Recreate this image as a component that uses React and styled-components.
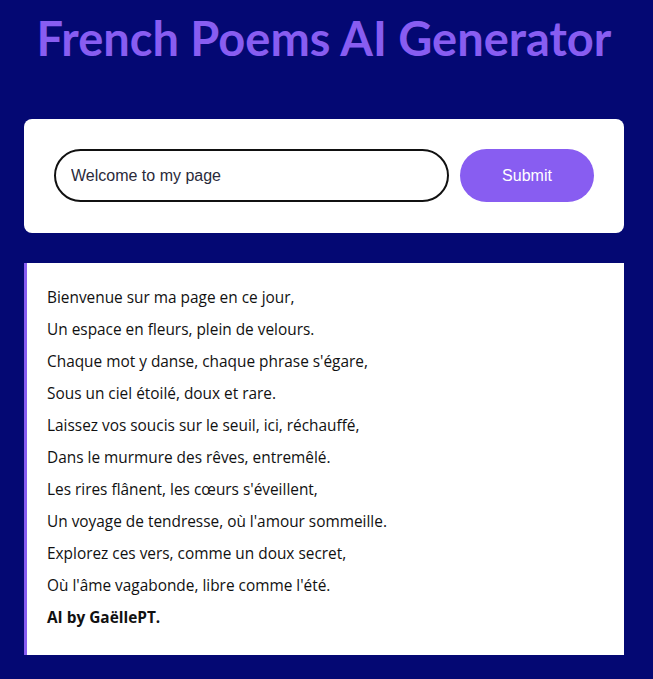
import React, { useState } from 'react'
import styled, { createGlobalStyle } from 'styled-components'

const poem = [
  'Bienvenue sur ma page en ce jour,',
  'Un espace en fleurs, plein de velours.',
  "Chaque mot y danse, chaque phrase s'égare,",
  'Sous un ciel étoilé, doux et rare.',
  'Laissez vos soucis sur le seuil, ici, réchauffé,',
  'Dans le murmure des rêves, entremêlé.',
  "Les rires flânent, les cœurs s'éveillent,",
  "Un voyage de tendresse, où l'amour sommeille.",
  'Explorez ces vers, comme un doux secret,',
  "Où l'âme vagabonde, libre comme l'été."
]

export default function App () {
  const [text, setText] = useState('Welcome to my page')

  return (
    <>
      <GlobalStyle />
      <StyledContainer>
        <StyledTitle>French Poems AI Generator</StyledTitle>
        <StyledFormCard onSubmit={event => { event.preventDefault() }}>
          <StyledInput
            value={text}
            onChange={event => { setText(event.target.value) }}
          />
          <StyledButton type='submit'>Submit</StyledButton>
        </StyledFormCard>
        <StyledPoem>
          {poem.map(line => <StyledLine key={line}>{line}</StyledLine>)}
          <StyledSignature>AI by GaëllePT.</StyledSignature>
        </StyledPoem>
      </StyledContainer>
    </>
  )
}

const GlobalStyle = createGlobalStyle`
  body {
    margin: 0;
    background: #040873;
    font-family: "Open Sans", "Noto Sans", sans-serif;
  }
`

const StyledContainer = styled.div`
  width: 600px;
  margin-left: 24px;
  padding-bottom: 24px;
`

const StyledTitle = styled.h1`
  margin: 12px 0 0;
  height: 107px;
  text-align: center;
  color: #885df1;
  font-family: Lato, sans-serif;
  font-size: 47px;
  line-height: 52px;
  font-weight: 700;
`

const StyledFormCard = styled.form`
  display: flex;
  align-items: center;
  gap: 11px;
  padding: 30px 30px 31px;
  background: #fff;
  border-radius: 8px;
`

const StyledInput = styled.input`
  flex: 1;
  box-sizing: border-box;
  height: 53px;
  padding: 0 15px;
  border: 2px solid #111;
  border-radius: 30px;
  font-family: "Liberation Sans", Arial, sans-serif;
  font-size: 16px;
  color: #2a2a3a;
  outline: none;
`

const StyledButton = styled.button`
  width: 134px;
  height: 53px;
  border: none;
  border-radius: 30px;
  background: #885df1;
  color: #fff;
  font-family: "Liberation Sans", Arial, sans-serif;
  font-size: 16px;
  cursor: pointer;
`

const StyledPoem = styled.div`
  margin-top: 30px;
  padding: 19px 20px 21px;
  background: #fff;
  border-left: 3px solid #885df1;
  line-height: 32px;
  font-size: 15.4px;
  color: #111;
`

const StyledLine = styled.div``

const StyledSignature = styled.div`
  font-weight: 700;
`
